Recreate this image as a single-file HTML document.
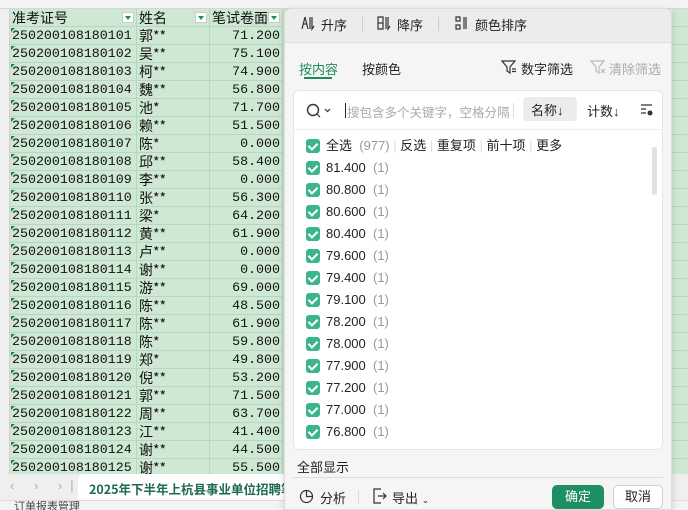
<!DOCTYPE html>
<html><head><meta charset="utf-8">
<style>
*{margin:0;padding:0;box-sizing:border-box}
body{width:688px;height:510px;overflow:hidden;background:#fff;position:relative;font-family:"Liberation Sans","Noto Sans CJK SC",sans-serif;}
.abs{position:absolute}
.grid{position:absolute;left:0;top:0;width:688px;height:474px;background:#e8e8e8}
.colhdr{position:absolute;left:0;top:0;width:688px;height:9px;background:#f3f3f3;border-bottom:1px solid #d6d6d6}
.gut{position:absolute;left:0;top:9px;width:10px;height:465px;background:#f0f0f0;border-right:1px solid #d0d0d0}
.row{position:absolute;left:10px;height:18px;width:678px;font-family:"Liberation Mono","Noto Sans CJK SC",monospace;font-size:13.3px;line-height:18px;color:#111}
.c{position:absolute;top:0;height:18px;background:#cfe8d4;border-right:1px solid #b9d6bf;border-bottom:1px solid #b9d6bf;white-space:nowrap;overflow:hidden}
.a{left:0;width:127px;padding-left:2px}
.b{left:127px;width:73px;padding-left:2px;font-family:"Noto Sans CJK SC",sans-serif;font-size:14px}
.d{left:200px;width:73px;text-align:right;padding-right:2px}
.a:before{content:"";position:absolute;left:1px;top:1px;border-top:4px solid #1a8a3c;border-right:4px solid transparent}
.hd .c{font-family:"Noto Sans CJK SC",sans-serif;font-size:14px}
.hd .a:before{display:none}
.dd{position:absolute;right:2px;top:3px;width:12px;height:11px;background:#fff;border:1px solid #ccc}
.dd:after{content:"";position:absolute;left:2px;top:3px;border-top:4px solid #1d8c5a;border-left:3px solid transparent;border-right:3px solid transparent}
.panel{position:absolute;left:284px;top:8px;width:388px;height:502px;background:#f5f5f5;border:1px solid #dcdcdc;border-radius:8px 8px 0 0;box-shadow:0 2px 8px rgba(0,0,0,.15);font-size:13px;color:#222}
.top{position:absolute;left:0;top:0;width:386px;height:34px;background:#ececec;border-bottom:1px solid #ddd;border-radius:8px 8px 0 0}
.card{position:absolute;left:8px;top:81px;width:370px;height:360px;background:#fff;border-radius:6px;border:1px solid #e6e6e6}
.cb{position:absolute;left:12px;width:14px;height:14px;background:#3db58a;border-radius:3px}
.cb:after{content:"";position:absolute;left:4px;top:2px;width:4px;height:7px;border:solid #fff;border-width:0 2px 2px 0;transform:rotate(45deg)}
.item{position:absolute;left:0;width:360px;height:20px;line-height:20px;font-size:13px}
.item span.t{position:absolute;left:32px}
.gray{color:#999}
</style></head><body>
<div class="grid"></div>
<div class="colhdr"></div>
<div class="gut"></div>
<div class="row hd" style="top:9px"><div class="c a">准考证号<div class="dd"></div></div><div class="c b">姓名<div class="dd"></div></div><div class="c d" style="text-align:left;padding-left:2px">笔试卷面<div class="dd"></div></div></div>

<div class="row" style="top:27px"><div class="c a">250200108180101</div><div class="c b">郭**</div><div class="c d">71.200</div></div>
<div class="row" style="top:45px"><div class="c a">250200108180102</div><div class="c b">吴**</div><div class="c d">75.100</div></div>
<div class="row" style="top:63px"><div class="c a">250200108180103</div><div class="c b">柯**</div><div class="c d">74.900</div></div>
<div class="row" style="top:81px"><div class="c a">250200108180104</div><div class="c b">魏**</div><div class="c d">56.800</div></div>
<div class="row" style="top:99px"><div class="c a">250200108180105</div><div class="c b">池*</div><div class="c d">71.700</div></div>
<div class="row" style="top:117px"><div class="c a">250200108180106</div><div class="c b">赖**</div><div class="c d">51.500</div></div>
<div class="row" style="top:135px"><div class="c a">250200108180107</div><div class="c b">陈*</div><div class="c d">0.000</div></div>
<div class="row" style="top:153px"><div class="c a">250200108180108</div><div class="c b">邱**</div><div class="c d">58.400</div></div>
<div class="row" style="top:171px"><div class="c a">250200108180109</div><div class="c b">李**</div><div class="c d">0.000</div></div>
<div class="row" style="top:189px"><div class="c a">250200108180110</div><div class="c b">张**</div><div class="c d">56.300</div></div>
<div class="row" style="top:207px"><div class="c a">250200108180111</div><div class="c b">梁*</div><div class="c d">64.200</div></div>
<div class="row" style="top:225px"><div class="c a">250200108180112</div><div class="c b">黄**</div><div class="c d">61.900</div></div>
<div class="row" style="top:243px"><div class="c a">250200108180113</div><div class="c b">卢**</div><div class="c d">0.000</div></div>
<div class="row" style="top:261px"><div class="c a">250200108180114</div><div class="c b">谢**</div><div class="c d">0.000</div></div>
<div class="row" style="top:279px"><div class="c a">250200108180115</div><div class="c b">游**</div><div class="c d">69.000</div></div>
<div class="row" style="top:297px"><div class="c a">250200108180116</div><div class="c b">陈**</div><div class="c d">48.500</div></div>
<div class="row" style="top:315px"><div class="c a">250200108180117</div><div class="c b">陈**</div><div class="c d">61.900</div></div>
<div class="row" style="top:333px"><div class="c a">250200108180118</div><div class="c b">陈*</div><div class="c d">59.800</div></div>
<div class="row" style="top:351px"><div class="c a">250200108180119</div><div class="c b">郑*</div><div class="c d">49.800</div></div>
<div class="row" style="top:369px"><div class="c a">250200108180120</div><div class="c b">倪**</div><div class="c d">53.200</div></div>
<div class="row" style="top:387px"><div class="c a">250200108180121</div><div class="c b">郭**</div><div class="c d">71.500</div></div>
<div class="row" style="top:405px"><div class="c a">250200108180122</div><div class="c b">周**</div><div class="c d">63.700</div></div>
<div class="row" style="top:423px"><div class="c a">250200108180123</div><div class="c b">江**</div><div class="c d">41.400</div></div>
<div class="row" style="top:441px"><div class="c a">250200108180124</div><div class="c b">谢**</div><div class="c d">44.500</div></div>
<div class="row" style="top:459px"><div class="c a">250200108180125</div><div class="c b">谢**</div><div class="c d">55.500</div></div>
<div class="abs" style="left:672px;top:9px;width:16px;height:465px;background:repeating-linear-gradient(#cfe8d4 0 17px,#b9d6bf 17px 18px)"></div>
<div class="abs" style="left:283px;top:9px;width:6px;height:465px;background:#cfe8d4"></div>

<div class="abs" style="left:0;top:474px;width:688px;height:26px;background:#efefef"></div>
<div class="abs" style="left:10px;top:478px;font-size:13px;color:#aaa;letter-spacing:8px">‹ › ›|</div>
<div class="abs" style="left:78px;top:474px;width:210px;height:26px;background:#fff;border-radius:6px 0 0 0;padding:5px 0 0 11px;font-size:12.5px;font-weight:bold;color:#1d6b4c;white-space:nowrap;overflow:hidden;font-family:'Noto Sans CJK SC',sans-serif">2025年下半年上杭县事业单位招聘笔</div>
<div class="abs" style="left:0;top:500px;width:688px;height:10px;background:#f3f3f3;border-top:1px solid #ddd;font-size:11px;color:#444;line-height:12px;padding-left:14px;overflow:hidden">订单报表管理</div>

<div class="panel">
 <div class="top">
  <svg class="abs" style="left:16px;top:7px" width="16" height="15" viewBox="0 0 16 15"><path d="M1 13 L4 1 L7 13 M2.5 8 H5.5 M9 1 V13 M11 1 V13 L13 10" fill="none" stroke="#333" stroke-width="1.2"/></svg>
  <span class="abs" style="left:36px;top:6px">升序</span>
  <div class="abs" style="left:77px;top:8px;width:1px;height:14px;background:#ccc"></div>
  <svg class="abs" style="left:92px;top:7px" width="16" height="15" viewBox="0 0 16 15"><path d="M1 1 H6 V13 H1 Z M1 7 H6 M9 1 V13 M11 1 V13 L13 10" fill="none" stroke="#333" stroke-width="1.2"/></svg>
  <span class="abs" style="left:112px;top:6px">降序</span>
  <div class="abs" style="left:153px;top:8px;width:1px;height:14px;background:#ccc"></div>
  <svg class="abs" style="left:170px;top:7px" width="16" height="15" viewBox="0 0 16 15"><path d="M1 1 H5 V5 H1 Z M1 9 H5 V13 H1 Z M9 1 V13 M11 1 V13" fill="none" stroke="#333" stroke-width="1.2"/></svg>
  <span class="abs" style="left:190px;top:6px">颜色排序</span>
 </div>
 <span class="abs" style="left:14px;top:50px;color:#1d8c5a">按内容</span>
 <div class="abs" style="left:19px;top:68px;width:28px;height:2px;background:#1d8c5a"></div>
 <span class="abs" style="left:77px;top:50px">按颜色</span>
 <svg class="abs" style="left:216px;top:50px" width="16" height="16" viewBox="0 0 16 16"><path d="M1 2 H14 L9 8 V14 L6 12 V8 Z M11 10 H15 M11 12.5 H15" fill="none" stroke="#333" stroke-width="1.2"/></svg>
 <span class="abs" style="left:236px;top:50px">数字筛选</span>
 <svg class="abs" style="left:305px;top:50px" width="16" height="16" viewBox="0 0 16 16"><path d="M1 2 H14 L9 8 V14 L6 12 V8 Z M11 10 L15 14 M15 10 L11 14" fill="none" stroke="#bbb" stroke-width="1.2"/></svg>
 <span class="abs" style="left:324px;top:50px;color:#aaa">清除筛选</span>
 <div class="card">
  <svg class="abs" style="left:12px;top:12px" width="26" height="16" viewBox="0 0 26 16"><circle cx="7" cy="7" r="5.5" fill="none" stroke="#333" stroke-width="1.4"/><path d="M11 11 L14 14 M19 6 L21.5 8.5 L24 6" fill="none" stroke="#333" stroke-width="1.2"/></svg>
  <div class="abs" style="left:51px;top:12px;width:1px;height:15px;background:#222"></div>
  <span class="abs" style="left:53px;top:11px;color:#aaa;font-size:12.5px">搜包含多个关键字，空格分隔</span>
  <div class="abs" style="left:219px;top:12px;width:1px;height:15px;background:#ddd"></div>
  <div class="abs" style="left:229px;top:6px;width:54px;height:24px;background:#ececec;border-radius:4px;padding:3px 0 0 8px">名称↓</div>
  <span class="abs" style="left:293px;top:10px">计数↓</span>
  <svg class="abs" style="left:346px;top:12px" width="14" height="14" viewBox="0 0 14 14"><path d="M1 2 H12 M1 6 H6 M1 10 H6" stroke="#333" stroke-width="1.2"/><circle cx="10" cy="10" r="2.5" fill="#333"/></svg>
  <div class="abs" style="left:0;top:38px;width:368px;height:1px;background:#eee"></div>
  <div class="item" style="top:45px"><div class="cb" style="top:3px"></div><span class="t">全选 <span class="gray">&nbsp;(977)</span> <span style="color:#ddd">|</span> 反选 <span style="color:#ddd">|</span> 重复项 <span style="color:#ddd">|</span> 前十项 <span style="color:#ddd">|</span> 更多</span></div>
  <div class="item" style="top:67px"><div class="cb" style="top:3px"></div><span class="t">81.400 <span class="gray">&nbsp;(1)</span></span></div>
  <div class="item" style="top:89px"><div class="cb" style="top:3px"></div><span class="t">80.800 <span class="gray">&nbsp;(1)</span></span></div>
  <div class="item" style="top:111px"><div class="cb" style="top:3px"></div><span class="t">80.600 <span class="gray">&nbsp;(1)</span></span></div>
  <div class="item" style="top:133px"><div class="cb" style="top:3px"></div><span class="t">80.400 <span class="gray">&nbsp;(1)</span></span></div>
  <div class="item" style="top:155px"><div class="cb" style="top:3px"></div><span class="t">79.600 <span class="gray">&nbsp;(1)</span></span></div>
  <div class="item" style="top:177px"><div class="cb" style="top:3px"></div><span class="t">79.400 <span class="gray">&nbsp;(1)</span></span></div>
  <div class="item" style="top:199px"><div class="cb" style="top:3px"></div><span class="t">79.100 <span class="gray">&nbsp;(1)</span></span></div>
  <div class="item" style="top:221px"><div class="cb" style="top:3px"></div><span class="t">78.200 <span class="gray">&nbsp;(1)</span></span></div>
  <div class="item" style="top:243px"><div class="cb" style="top:3px"></div><span class="t">78.000 <span class="gray">&nbsp;(1)</span></span></div>
  <div class="item" style="top:265px"><div class="cb" style="top:3px"></div><span class="t">77.900 <span class="gray">&nbsp;(1)</span></span></div>
  <div class="item" style="top:287px"><div class="cb" style="top:3px"></div><span class="t">77.200 <span class="gray">&nbsp;(1)</span></span></div>
  <div class="item" style="top:309px"><div class="cb" style="top:3px"></div><span class="t">77.000 <span class="gray">&nbsp;(1)</span></span></div>
  <div class="item" style="top:331px"><div class="cb" style="top:3px"></div><span class="t">76.800 <span class="gray">&nbsp;(1)</span></span></div>
  <div class="abs" style="left:358px;top:56px;width:5px;height:48px;background:#e2e2e2;border-radius:3px"></div>
 </div>
 <span class="abs" style="left:12px;top:448px">全部显示</span>
 <div class="abs" style="left:8px;top:468px;width:370px;height:1px;background:#ddd"></div>
 <svg class="abs" style="left:14px;top:480px" width="15" height="15" viewBox="0 0 15 15"><circle cx="7.5" cy="7.5" r="6" fill="none" stroke="#333" stroke-width="1.2"/><path d="M7.5 1.5 V7.5 H13.5" fill="none" stroke="#333" stroke-width="1.2"/></svg>
 <span class="abs" style="left:35px;top:479px">分析</span>
 <div class="abs" style="left:73px;top:481px;width:1px;height:14px;background:#ddd"></div>
 <svg class="abs" style="left:87px;top:479px" width="16" height="16" viewBox="0 0 16 16"><path d="M9 1 H2 V15 H9 M6 8 H14 M11 5 L14 8 L11 11" fill="none" stroke="#333" stroke-width="1.2"/></svg>
 <span class="abs" style="left:107px;top:479px">导出 <span style="font-size:9px">⌄</span></span>
 <div class="abs" style="left:267px;top:476px;width:52px;height:24px;background:#1d8f63;border-radius:5px;color:#fff;text-align:center;line-height:24px">确定</div>
 <div class="abs" style="left:328px;top:476px;width:50px;height:24px;background:#fff;border:1px solid #d0d0d0;border-radius:5px;text-align:center;line-height:22px">取消</div>
</div>
</body></html>
